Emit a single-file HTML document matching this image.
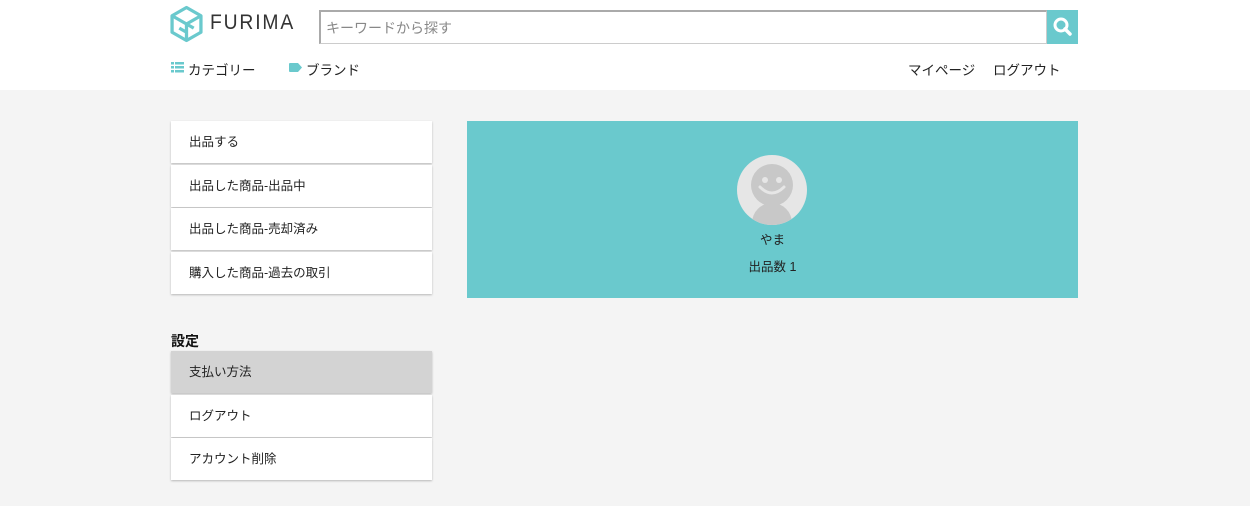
<!DOCTYPE html><html><head><meta charset="utf-8"><style>
*{margin:0;padding:0;box-sizing:border-box}
body{width:1250px;height:506px;background:#f4f4f4;font-family:"Liberation Sans","Noto Sans CJK JP",sans-serif;color:#222;position:relative;overflow:hidden}
.hd{position:absolute;left:0;top:0;width:1250px;height:90px;background:#fff}
.a{position:absolute}
.item{position:absolute;left:171px;width:261px;height:42px;background:#fff;box-shadow:0 1px 2px rgba(0,0,0,.25);font-size:12.5px;line-height:42px;padding-left:18px}
</style></head><body>
<div class="hd">
<svg class="a" style="left:170px;top:5px" width="33" height="38" viewBox="0 0 32 36"><g fill="none" stroke="#6ac9cd" stroke-width="3.2" stroke-linejoin="round"><path d="M16 2 L30 10 L30 26 L16 34 L2 26 L2 10 Z"/><path d="M2 10 L16 18 L30 10 M16 18 L16 34 M9 22 L16 26 M9 14 L23 22"/></g></svg>
<div class="a" style="left:210px;top:11px;font-size:21px;letter-spacing:2px;color:#333;transform:scaleX(.92);transform-origin:left">FURIMA</div>
<div class="a" style="left:319px;top:10px;width:728px;height:34px;border:1px solid #ccc;border-top:2px solid #aaa;border-left:2px solid #aaa;font-size:14px;color:#888;padding:6px 5px">キーワードから探す</div>
<div class="a" style="left:1047px;top:10px;width:31px;height:34px;background:#6ac9cd"><svg width="31" height="34"><circle cx="14" cy="15" r="6" fill="none" stroke="#fff" stroke-width="3"/><path d="M18 19 L23 24" stroke="#fff" stroke-width="3.5" stroke-linecap="round"/></svg></div>
<svg class="a" style="left:171px;top:62px" width="13" height="11"><g fill="#6ac9cd"><rect y="0" width="3" height="2.5"/><rect x="4" y="0" width="9" height="2.5"/><rect y="4" width="3" height="2.5"/><rect x="4" y="4" width="9" height="2.5"/><rect y="8" width="3" height="2.5"/><rect x="4" y="8" width="9" height="2.5"/></g></svg>
<div class="a" style="left:188px;top:59px;font-size:13.5px">カテゴリー</div>
<svg class="a" style="left:289px;top:63px" width="13" height="9"><path d="M0 1 Q0 0 1 0 L9 0 L13 4.5 L9 9 L1 9 Q0 9 0 8Z" fill="#6ac9cd"/></svg>
<div class="a" style="left:306px;top:59px;font-size:13.5px">ブランド</div>
<div class="a" style="left:908px;top:59px;font-size:13.5px">マイページ</div>
<div class="a" style="left:993px;top:59px;font-size:13.5px">ログアウト</div>
</div>
<div class="item" style="top:121px">出品する</div>
<div class="item" style="top:165px">出品した商品-出品中</div>
<div class="item" style="top:208px">出品した商品-売却済み</div>
<div class="item" style="top:252px">購入した商品-過去の取引</div>
<div class="a" style="left:171px;top:331px;font-size:14px;font-weight:bold;color:#111">設定</div>
<div class="item" style="top:351px;background:#d3d3d3">支払い方法</div>
<div class="item" style="top:395px">ログアウト</div>
<div class="item" style="top:438px">アカウント削除</div>
<div class="a" style="left:467px;top:121px;width:611px;height:177px;background:#6ac9cd">
<svg class="a" style="left:270px;top:34px" width="70" height="70" viewBox="0 0 70 70"><defs><clipPath id="c"><circle cx="35" cy="35" r="35"/></clipPath></defs><circle cx="35" cy="35" r="35" fill="#e6e6e6"/><g clip-path="url(#c)" fill="#c8c8c8"><circle cx="35" cy="30" r="21"/><ellipse cx="35" cy="68" rx="20" ry="20"/></g><circle cx="28" cy="25" r="3" fill="#e6e6e6"/><circle cx="42" cy="25" r="3" fill="#e6e6e6"/><path d="M23 32 Q35 44 47 32" stroke="#e6e6e6" stroke-width="3" fill="none" stroke-linecap="round"/></svg>
<div class="a" style="left:0;width:611px;top:108px;text-align:center;font-size:12.5px">やま</div>
<div class="a" style="left:0;width:611px;top:135px;text-align:center;font-size:12.5px">出品数 1</div>
</div>
</body></html>
